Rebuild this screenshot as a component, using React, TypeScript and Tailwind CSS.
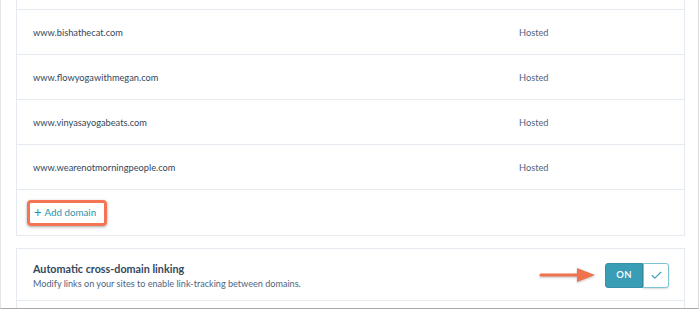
import { Check } from "lucide-react";

const domains = [
  "www.bishathecat.com",
  "www.flowyogawithmegan.com",
  "www.vinyasayogabeats.com",
  "www.wearenotmorningpeople.com",
];

function Arrow() {
  return (
    <svg width="58" height="16" viewBox="0 0 58 16" className="drop-shadow-[0_1px_1px_rgba(0,0,0,0.25)]">
      <line x1="2" y1="8" x2="42" y2="8" stroke="#f0734e" strokeWidth="3" strokeLinecap="round" />
      <polygon points="38,1 56,8 38,15" fill="#f0734e" />
    </svg>
  );
}

export default function App() {
  return (
    <div className="w-[700px] h-[310px] overflow-hidden bg-white font-['Lato',sans-serif]">
      <div className="w-[699px] h-[309px] border-l border-r border-l-[#e3e3e3] border-r-[#dcdcdc] border-b border-b-[#a8a8a8] pl-[15px] overflow-hidden">
        {/* domain table */}
        <div className="w-[669px] border-l border-r border-b border-[#e5e9f0]">
          <div className="h-[10px] border-b border-[#e5e9f0]" />
          {domains.map((d) => (
            <div key={d} className="h-[45px] border-b border-[#e5e9f0] flex items-center text-[9.25px] pt-[1px]">
              <div className="w-[502px] pl-[16px] text-[#33475b]">{d}</div>
              <div className="text-[#4f6580]">Hosted</div>
            </div>
          ))}
          <div className="h-[45px] flex items-center pl-[10px]">
            <div className="h-[26px] w-[80px] pl-[4px] flex items-center gap-[3px] rounded-[4px] border-[3px] border-[#f47453] shadow-[0_1px_3px_rgba(0,0,0,0.35)] text-[#1f93ad] text-[9.75px]">
              <span className="text-[13px] leading-none -mt-[1px]">+</span>
              <span>Add domain</span>
            </div>
          </div>
        </div>

        {/* cross-domain linking */}
        <div className="w-[669px] mt-[12px] border-l border-r border-t border-[#e5e9f0] h-[80px]">
          <div className="h-[52px] border-b border-[#e5e9f0] flex items-center pl-[16px] pr-[15px]">
            <div className="flex-1 pt-[2px]">
              <div className="text-[10.75px] font-bold text-[#33475b] leading-[15px]">Automatic cross-domain linking</div>
              <div className="text-[9.1px] text-[#4f6580] leading-[15px]">
                Modify links on your sites to enable link-tracking between domains.
              </div>
            </div>
            <div className="mr-[8px] mt-[1px]">
              <Arrow />
            </div>
            <div className="flex h-[25px] mt-[1px]">
              <div className="w-[38px] bg-[#3a9db6] border border-[#3590a8] rounded-l-[3px] flex items-center justify-center text-white text-[9.5px] font-semibold tracking-wide">
                ON
              </div>
              <div className="w-[26px] bg-white border border-[#7cc3d4] rounded-r-[3px] flex items-center justify-center shadow-[0_1px_2px_rgba(0,0,0,0.15)]">
                <Check size={13} strokeWidth={2} color="#3a9db6" />
              </div>
            </div>
          </div>
        </div>
      </div>
    </div>
  );
}
